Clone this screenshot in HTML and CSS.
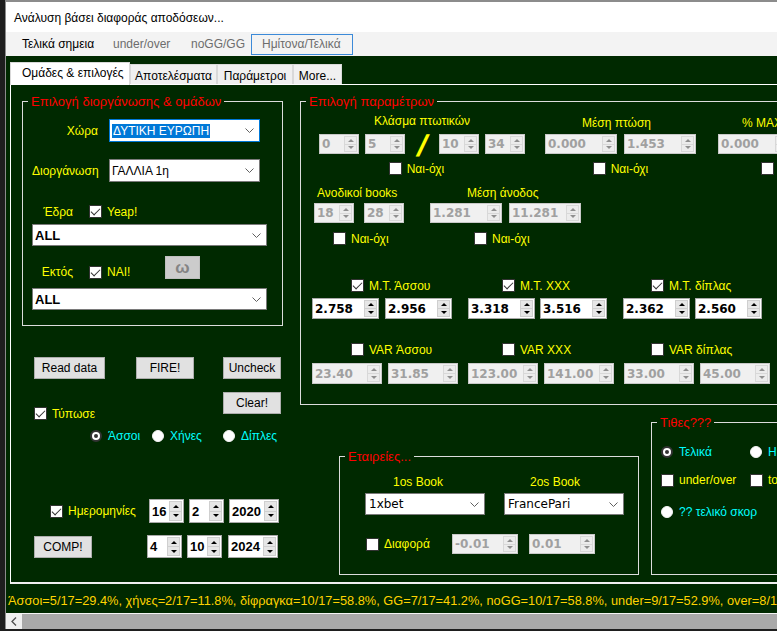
FILE: index.html
```html
<!DOCTYPE html>
<html lang="el">
<head>
<meta charset="utf-8">
<title>Ανάλυση βάσει διαφοράς αποδόσεων</title>
<link rel="stylesheet" href="styles.css">
</head>
<body>
<div class="window">
  <div class="titlebar">Ανάλυση βάσει διαφοράς αποδόσεων...</div>
  <div class="topstrip">
    <span class="ttab t1">Τελικά σημεια</span>
    <span class="ttab t2">under/over</span>
    <span class="ttab t3">noGG/GG</span>
    <span class="ttab t4">Ημίτονα/Τελικά</span>
  </div>
  <div class="content">
    <div class="tabs">
      <div class="tab sel">Ομάδες &amp; επιλογές</div>
      <div class="tab tb2">Αποτελέσματα</div>
      <div class="tab tb3">Παράμετροι</div>
      <div class="tab tb4">More...</div>
    </div>
    <div class="page">
      <div class="lcol">
        <fieldset class="grp g-league">
          <legend>Επιλογή διοργάνωσης &amp; ομάδων</legend>
          <div class="gbody lbody">
            <div class="frow r1">
              <span class="rlab">Χώρα</span>
              <span class="combo c-country focus"><span class="cv"><span class="hl">ΔΥΤΙΚΗ ΕΥΡΩΠΗ</span></span><svg class="chev" width="9" height="5" viewBox="0 0 9 5"><polyline points="0.5,0.5 4.5,4.5 8.5,0.5" fill="none" stroke="#606060" stroke-width="1"/></svg></span>
            </div>
            <div class="frow r2">
              <span class="rlab">Διοργάνωση</span>
              <span class="combo c-country"><span class="cv">ΓΑΛΛΙΑ 1η</span><svg class="chev" width="9" height="5" viewBox="0 0 9 5"><polyline points="0.5,0.5 4.5,4.5 8.5,0.5" fill="none" stroke="#606060" stroke-width="1"/></svg></span>
            </div>
            <div class="frow r3">
              <span class="slab">Έδρα</span>
              <span class="cb on"></span>
              <span class="cbt">Yeap!</span>
            </div>
            <div class="combo c-all c-all1"><span class="cv">ALL</span><svg class="chev" width="9" height="5" viewBox="0 0 9 5"><polyline points="0.5,0.5 4.5,4.5 8.5,0.5" fill="none" stroke="#606060" stroke-width="1"/></svg></div>
            <div class="frow r4">
              <span class="slab">Εκτός</span>
              <span class="cb on"></span>
              <span class="cbt nai">ΝΑΙ!</span>
              <span class="btn omega">ω</span>
            </div>
            <div class="combo c-all c-all2"><span class="cv">ALL</span><svg class="chev" width="9" height="5" viewBox="0 0 9 5"><polyline points="0.5,0.5 4.5,4.5 8.5,0.5" fill="none" stroke="#606060" stroke-width="1"/></svg></div>
          </div>
        </fieldset>

        <div class="btnrow">
          <span class="btn b-read">Read data</span>
          <span class="btn b-fire">FIRE!</span>
          <span class="btn b-unc">Uncheck</span>
        </div>
        <div class="printrow">
          <span class="print"><span class="cb on"></span><span class="ylab">Τύπωσε</span></span>
          <span class="btn b-clear">Clear!</span>
        </div>
        <div class="radiorow">
          <span class="ropt o1"><span class="rb on"></span><span class="clab">Άσσοι</span></span>
          <span class="ropt o2"><span class="rb"></span><span class="clab">Χήνες</span></span>
          <span class="ropt"><span class="rb"></span><span class="clab">Δίπλες</span></span>
        </div>
        <div class="daterow d1">
          <span class="dlead"><span class="cb on"></span><span class="ylab">Ημερομηνίες</span></span>
          <span class="spin date sd"><span class="v">16</span><span class="ud"><i class="up"></i><i class="dn"></i></span></span>
          <span class="spin date sd ml5"><span class="v">2</span><span class="ud"><i class="up"></i><i class="dn"></i></span></span>
          <span class="spin date sy ml5"><span class="v">2020</span><span class="ud"><i class="up"></i><i class="dn"></i></span></span>
        </div>
        <div class="daterow d2">
          <span class="dlead2"><span class="btn b-comp">COMP!</span></span>
          <span class="spin date sd"><span class="v">4</span><span class="ud"><i class="up"></i><i class="dn"></i></span></span>
          <span class="spin date sd ml5"><span class="v">10</span><span class="ud"><i class="up"></i><i class="dn"></i></span></span>
          <span class="spin date sy ml6"><span class="v">2024</span><span class="ud"><i class="up"></i><i class="dn"></i></span></span>
        </div>
      </div>

      <div class="rcol">
        <fieldset class="grp g-params">
          <legend>Επιλογή παραμέτρων</legend>
          <div class="gbody pbody">
            <div class="prow pa">
              <div class="cell ck">
                <div class="plab pk">Κλάσμα πτωτικών</div>
                <div class="spins">
                  <span class="spin dis w40"><span class="v">0</span><span class="ud"><i class="up"></i><i class="dn"></i></span></span>
                  <span class="spin dis w40 ml6"><span class="v">5</span><span class="ud"><i class="up"></i><i class="dn"></i></span></span>
                  <span class="slash"><span class="sl">/</span></span>
                  <span class="spin dis w40"><span class="v">10</span><span class="ud"><i class="up"></i><i class="dn"></i></span></span>
                  <span class="spin dis w40 ml6"><span class="v">34</span><span class="ud"><i class="up"></i><i class="dn"></i></span></span>
                </div>
                <div class="yn ynk"><span class="cb"></span><span class="ylab">Ναι-όχι</span></div>
              </div>
              <div class="cell cm">
                <div class="plab pm">Μέση πτώση</div>
                <div class="spins">
                  <span class="spin dis w72"><span class="v">0.000</span><span class="ud"><i class="up"></i><i class="dn"></i></span></span>
                  <span class="spin dis w72 ml7"><span class="v">1.453</span><span class="ud"><i class="up"></i><i class="dn"></i></span></span>
                </div>
                <div class="yn ynm"><span class="cb"></span><span class="ylab">Ναι-όχι</span></div>
              </div>
              <div class="cell cx">
                <div class="plab px">% MAX</div>
                <div class="spins">
                  <span class="spin dis w72"><span class="v">0.000</span><span class="ud"><i class="up"></i><i class="dn"></i></span></span>
                </div>
                <div class="yn ynx"><span class="cb"></span><span class="ylab">Ναι-όχι</span></div>
              </div>
            </div>

            <div class="prow pb">
              <div class="cell cab">
                <div class="plab plab-ab">Ανοδικοί books</div>
                <div class="spins">
                  <span class="spin dis w40"><span class="v">18</span><span class="ud"><i class="up"></i><i class="dn"></i></span></span>
                  <span class="spin dis w40 ml10"><span class="v">28</span><span class="ud"><i class="up"></i><i class="dn"></i></span></span>
                </div>
                <div class="yn ynab"><span class="cb"></span><span class="ylab">Ναι-όχι</span></div>
              </div>
              <div class="cell cma">
                <div class="plab plab-ma">Μέση άνοδος</div>
                <div class="spins">
                  <span class="spin dis w72"><span class="v">1.281</span><span class="ud"><i class="up"></i><i class="dn"></i></span></span>
                  <span class="spin dis w72 ml7"><span class="v">11.281</span><span class="ud"><i class="up"></i><i class="dn"></i></span></span>
                </div>
                <div class="yn ynma"><span class="cb"></span><span class="ylab">Ναι-όχι</span></div>
              </div>
            </div>

            <div class="prow pc">
              <div class="cell c1">
                <div class="head h39"><span class="cb on"></span><span class="ylab">Μ.Τ. Άσσου</span></div>
                <div class="spins">
                  <span class="spin w67"><span class="v">2.758</span><span class="ud"><i class="up"></i><i class="dn"></i></span></span>
                  <span class="spin w67 ml6"><span class="v">2.956</span><span class="ud"><i class="up"></i><i class="dn"></i></span></span>
                </div>
              </div>
              <div class="cell c2">
                <div class="head h34"><span class="cb on"></span><span class="ylab">Μ.Τ. ΧΧΧ</span></div>
                <div class="spins">
                  <span class="spin w67"><span class="v">3.318</span><span class="ud"><i class="up"></i><i class="dn"></i></span></span>
                  <span class="spin w67 ml5"><span class="v">3.516</span><span class="ud"><i class="up"></i><i class="dn"></i></span></span>
                </div>
              </div>
              <div class="cell c2">
                <div class="head h28"><span class="cb on"></span><span class="ylab">Μ.Τ. δίπλας</span></div>
                <div class="spins">
                  <span class="spin w67"><span class="v">2.362</span><span class="ud"><i class="up"></i><i class="dn"></i></span></span>
                  <span class="spin w67 ml5"><span class="v">2.560</span><span class="ud"><i class="up"></i><i class="dn"></i></span></span>
                </div>
              </div>
            </div>

            <div class="prow pd">
              <div class="cell c1">
                <div class="head h39"><span class="cb"></span><span class="ylab">VAR Άσσου</span></div>
                <div class="spins">
                  <span class="spin dis w70"><span class="v">23.40</span><span class="ud"><i class="up"></i><i class="dn"></i></span></span>
                  <span class="spin dis w70 ml6"><span class="v">31.85</span><span class="ud"><i class="up"></i><i class="dn"></i></span></span>
                </div>
              </div>
              <div class="cell dd">
                <div class="head h34"><span class="cb"></span><span class="ylab">VAR ΧΧΧ</span></div>
                <div class="spins">
                  <span class="spin dis w70"><span class="v">123.00</span><span class="ud"><i class="up"></i><i class="dn"></i></span></span>
                  <span class="spin dis w70 ml6"><span class="v">141.00</span><span class="ud"><i class="up"></i><i class="dn"></i></span></span>
                </div>
              </div>
              <div class="cell dd">
                <div class="head h27"><span class="cb"></span><span class="ylab">VAR δίπλας</span></div>
                <div class="spins">
                  <span class="spin dis w70"><span class="v">33.00</span><span class="ud"><i class="up"></i><i class="dn"></i></span></span>
                  <span class="spin dis w70 ml6"><span class="v">45.00</span><span class="ud"><i class="up"></i><i class="dn"></i></span></span>
                </div>
              </div>
            </div>
          </div>
        </fieldset>

        <div class="brow">
          <fieldset class="grp g-books">
            <legend>Εταιρείες...</legend>
            <div class="gbody bbody">
              <div class="blabs">
                <span class="bl1">1os Book</span>
                <span class="bl2">2os Book</span>
              </div>
              <div class="bcombos">
                <span class="combo c-book cb1"><span class="cv">1xbet</span><svg class="chev" width="9" height="5" viewBox="0 0 9 5"><polyline points="0.5,0.5 4.5,4.5 8.5,0.5" fill="none" stroke="#606060" stroke-width="1"/></svg></span>
                <span class="combo c-book cb2"><span class="cv">FrancePari</span><svg class="chev" width="9" height="5" viewBox="0 0 9 5"><polyline points="0.5,0.5 4.5,4.5 8.5,0.5" fill="none" stroke="#606060" stroke-width="1"/></svg></span>
              </div>
              <div class="bdiff">
                <span class="cb"></span>
                <span class="ylab dlab">Διαφορά</span>
                <span class="spin dis w66"><span class="v">-0.01</span><span class="ud"><i class="up"></i><i class="dn"></i></span></span>
                <span class="spin dis w66 ml11"><span class="v">0.01</span><span class="ud"><i class="up"></i><i class="dn"></i></span></span>
              </div>
            </div>
          </fieldset>
          <fieldset class="grp g-tith">
            <legend>Τιθες???</legend>
            <div class="gbody tbody">
              <div class="trow">
                <span class="ti"><span class="rb on"></span><span class="clab">Τελικά</span></span>
                <span class="ti"><span class="rb"></span><span class="clab">Ημίτονα</span></span>
              </div>
              <div class="trow tr2">
                <span class="ti"><span class="cb"></span><span class="ylab">under/over</span></span>
                <span class="ti"><span class="cb"></span><span class="ylab">total</span></span>
              </div>
              <div class="trow tr3">
                <span class="ti wide"><span class="rb"></span><span class="clab">?? τελικό σκορ</span></span>
              </div>
            </div>
          </fieldset>
        </div>
      </div>
    </div>
    <div class="status">Άσσοι=5/17=29.4%, χήνες=2/17=11.8%, δίφραγκα=10/17=58.8%, GG=7/17=41.2%, noGG=10/17=58.8%, under=9/17=52.9%, over=8/17=47.1%</div>
  </div>
  <div class="hscroll">
    <span class="sbtn"><svg width="6" height="9" viewBox="0 0 6 9"><polyline points="5,0.5 1,4.5 5,8.5" fill="none" stroke="#505050" stroke-width="1.3"/></svg></span>
  </div>
</div>
</body>
</html>
```

FILE: styles.css
```css
* { box-sizing: border-box; }
html, body { margin: 0; padding: 0; }
body {
  width: 777px;
  height: 631px;
  overflow: hidden;
  background: #1e1e1e;
  font-family: "Liberation Sans", Arial, sans-serif;
  font-size: 12px;
  color: #000;
}
.window {
  margin-left: 5px;
  width: 772px;
  height: 629px;
  border-top: 2px solid #8c8c8c;
  border-left: 1px solid #8c8c8c;
  background: #fff;
  overflow: hidden;
  display: flex;
  flex-direction: column;
}
.titlebar {
  height: 30px;
  flex: none;
  display: flex;
  align-items: center;
  padding: 2px 0 0 8px;
  font-size: 12px;
}
.topstrip {
  height: 24px;
  flex: none;
  background: #f3f3f3;
  display: flex;
  align-items: center;
  padding-left: 16px;
}
.ttab { color: #6d6d6d; flex: none; white-space: nowrap; }
.t1 { width: 91px; color: #000; }
.t2 { width: 78px; }
.t3 { width: 60px; }
.t4 {
  width: 102px;
  height: 21px;
  border: 1px solid #3c8ad8;
  padding-left: 10px;
  display: flex;
  align-items: center;
}
.content {
  height: 557px;
  flex: none;
  background: #002900;
  display: flex;
  flex-direction: column;
}
.tabs {
  margin-top: 6px;
  height: 22px;
  flex: none;
  display: flex;
  align-items: flex-end;
  padding-left: 4px;
  position: relative;
  z-index: 1;
}
.tab {
  height: 20px;
  background: #f0f0f0;
  border: 1px solid #d9d9d9;
  border-bottom: none;
  display: flex;
  align-items: center;
  justify-content: center;
  padding-top: 3px;
  white-space: nowrap;
  flex: none;
}
.tab.sel {
  width: 120px;
  height: 23px;
  margin-bottom: -1px;
  background: #fff;
  justify-content: flex-start;
  padding: 0 0 2px 11px;
}
.tb2 { width: 87px; }
.tb3 { width: 76px; }
.tb4 { width: 49px; }
.page {
  margin-left: 4px;
  width: 790px;
  height: 500px;
  flex: none;
  border: 1px solid #fff;
  border-bottom: 2px solid #f0f0f0;
  border-right: none;
  display: flex;
}
.lcol { width: 289px; flex: none; }
.rcol { width: 500px; flex: none; }

/* group boxes */
.grp {
  margin: 0;
  padding: 0;
  border: 1px solid #dcdcdc;
  min-width: 0;
  flex: none;
}
.grp > legend {
  font-size: 13px;
  line-height: 15px;
  color: #ff0000;
  padding: 0 3px;
  margin-left: 5px;
}
.g-league { margin: 9px 0 0 11px; width: 261px; }
.lbody { padding: 10px 0 15px 9px; }
.frow { display: flex; align-items: center; }
.r1 { height: 23px; }
.r2 { height: 23px; margin-top: 17px; }
.r3 { height: 13px; margin-top: 23px; }
.r4 { height: 23px; margin-top: 10px; align-items: flex-end; }
.rlab { width: 66px; text-align: right; margin-right: 11px; color: #ffff00; }
.slab { width: 41px; text-align: right; color: #ffff00; line-height: 14px; }
.r3 .cb, .r4 .cb { margin-left: 16px; }
.cbt { margin-left: 5px; color: #ffff00; line-height: 14px; }
.nai { width: 58px; }
.ylab { color: #ffff00; margin-left: 5px; white-space: nowrap; line-height: 14px; }
.clab { color: #00ffff; white-space: nowrap; line-height: 14px; }

/* combos */
.combo {
  display: flex;
  align-items: center;
  background: #fff;
  border: 1px solid #7a7a7a;
  padding: 0 5px 0 2px;
  color: #000;
  flex: none;
}
.combo .cv { flex: 1; white-space: nowrap; overflow: hidden; }
.chev { flex: none; }
.c-country { width: 151px; height: 23px; }
.focus { border-color: #0078d7; }
.hl { display: inline-block; background: #0078d7; color: #fff; line-height: 14px; padding: 0 1px; }
.c-all { width: 235px; height: 22px; font-weight: bold; font-size: 13px; }
.c-all1 { margin-top: 6px; }
.c-all2 { margin-top: 9px; }

/* buttons */
.btn {
  display: flex;
  align-items: center;
  justify-content: center;
  background: #e1e1e1;
  border: 1px solid #adadad;
  height: 22px;
  flex: none;
  white-space: nowrap;
}
.omega {
  width: 35px;
  height: 23px;
  background: #cccccc;
  border-color: #bfbfbf;
  color: #848484;
  font-weight: bold;
  font-size: 17px;
}
.btnrow { display: flex; margin-top: 31px; padding-left: 23px; }
.b-read { width: 71px; }
.b-fire { width: 58px; margin-left: 31px; }
.b-unc { width: 58px; margin-left: 29px; }
.printrow { display: flex; margin-top: 13px; padding-left: 23px; }
.print { width: 189px; height: 13px; margin-top: 15px; display: flex; align-items: center; flex: none; }
.b-clear { width: 58px; }
.radiorow { display: flex; align-items: center; height: 14px; margin-top: 9px; padding-left: 79px; }
.ropt { display: flex; align-items: center; flex: none; }
.o1 { width: 62px; }
.o2 { width: 71px; }
.daterow { display: flex; align-items: center; }
.d1 { margin-top: 56px; height: 24px; padding-left: 39px; }
.d2 { margin-top: 12px; height: 23px; padding-left: 23px; }
.dlead { width: 99px; display: flex; align-items: center; flex: none; }
.dlead2 { width: 113px; flex: none; }
.b-comp { width: 58px; }

/* checkbox & radio */
.cb {
  width: 13px;
  height: 13px;
  flex: none;
  border: 1px solid #333;
  background: #fff;
  position: relative;
}
.cb.on::after {
  content: "";
  position: absolute;
  left: 3px;
  top: 0px;
  width: 4px;
  height: 8px;
  border: solid #333;
  border-width: 0 1.5px 1.5px 0;
  transform: rotate(45deg);
}
.rb {
  width: 12px;
  height: 12px;
  flex: none;
  border-radius: 50%;
  background: #fff;
  border: 1px solid #f4f4f4;
  margin-right: 6px;
  position: relative;
}
.rb.on { border: 2px solid #333; }
.rb.on::after {
  content: "";
  position: absolute;
  left: 2px;
  top: 2px;
  width: 4px;
  height: 4px;
  border-radius: 50%;
  background: #333;
}

/* spinners */
.spin {
  display: flex;
  height: 21px;
  flex: none;
  border: 1px solid #a9a9a9;
  background: #fff;
  font-family: "DejaVu Sans", Verdana, sans-serif;
  font-weight: bold;
  font-size: 12px;
  color: #000;
}
.spin .v {
  flex: 1;
  padding-left: 2px;
  display: flex;
  align-items: center;
  overflow: hidden;
  white-space: nowrap;
}
.spin .ud {
  width: 14px;
  flex: none;
  display: flex;
  flex-direction: column;
  padding: 1px 1px 1px 0;
}
.spin .ud i {
  flex: 1;
  background: #e6e6e6;
  border: 1px solid #cfcfcf;
  display: flex;
  align-items: center;
  justify-content: center;
}
.spin .ud i + i { border-top: none; }
.ud .up::before {
  content: "";
  border-left: 3px solid transparent;
  border-right: 3px solid transparent;
  border-bottom: 3px solid #000;
}
.ud .dn::before {
  content: "";
  border-left: 3px solid transparent;
  border-right: 3px solid transparent;
  border-top: 3px solid #000;
}
.spin.dis { background: #f0f0f0; border-color: #c8c8c8; color: #a0a0a0; }
.spin.dis .ud i { background: #ececec; border-color: #d8d8d8; }
.spin.dis .ud .up::before { border-bottom-color: #8f8f8f; }
.spin.dis .ud .dn::before { border-top-color: #8f8f8f; }
.spin.date { font-family: "Liberation Sans", Arial, sans-serif; font-size: 13px; }
.sd { width: 35px; height: 100%; }
.sy { width: 50px; height: 100%; }
.w40 { width: 40px; height: 20px; }
.w72 { width: 72px; height: 20px; }
.w67 { width: 67px; }
.w70 { width: 70px; }
.w66 { width: 66px; height: 20px; }
.ml5 { margin-left: 5px; }
.ml6 { margin-left: 6px; }
.ml7 { margin-left: 7px; }
.ml10 { margin-left: 10px; }
.ml11 { margin-left: 11px; }

/* params group */
.g-params { margin-top: 9px; width: 490px; }
.pbody { padding-bottom: 20px; }
.prow { display: flex; align-items: flex-start; }
.cell { flex: none; }
.plab { color: #ffff00; line-height: 14px; white-space: nowrap; }
.pa .plab { height: 25px; text-align: center; }
.pk { padding-top: 5px; }
.pm { padding-top: 7px; padding-right: 8px; }
.pa .px { padding-top: 7px; padding-left: 24px; text-align: left; }
.spins { display: flex; height: 20px; }
.slash { width: 34px; height: 20px; flex: none; display: flex; justify-content: center; }
.sl {
  display: block;
  color: #ffff00;
  font-family: "Liberation Sans", Arial, sans-serif;
  font-weight: bold;
  font-size: 30px;
  line-height: 24px;
  height: 20px;
  transform: skewX(-16deg);
  padding-left: 3px;
}
.yn { display: flex; align-items: center; height: 13px; margin-top: 8px; }
.yn .ylab { margin-left: 5px; }
.ck { margin-left: 18px; width: 206px; }
.ynk { justify-content: center; padding-right: 11px; }
.cm { margin-left: 20px; width: 151px; }
.ynm { justify-content: center; }
.cx { margin-left: 22px; width: 150px; }
.ynx { padding-left: 43px; }

.pb { margin-top: 11px; }
.pb .plab { height: 14px; }
.pb .spins { margin-top: 3px; }
.pb .yn { margin-top: 9px; }
.cab { margin-left: 13px; width: 90px; }
.plab-ab { padding-left: 3px; }
.ynab { padding-left: 19px; }
.cma { margin-left: 26px; width: 151px; }
.plab-ma { padding-left: 37px; }
.ynma { padding-left: 44px; }

.head { display: flex; align-items: center; height: 13px; }
.head .ylab { margin-left: 5px; }
.h39 { padding-left: 39px; }
.h34 { padding-left: 34px; }
.h28 { padding-left: 28px; }
.h27 { padding-left: 27px; }
.pc { margin-top: 34px; }
.pc .spins { margin-top: 6px; height: 21px; }
.c1 { margin-left: 11px; }
.c2 { margin-left: 16px; }
.pd { margin-top: 24px; }
.pd .spins { margin-top: 7px; height: 21px; }
.dd { margin-left: 10px; }

/* bottom groups */
.brow { display: flex; align-items: flex-end; margin-top: 10px; height: 160px; }
.g-books { margin-left: 39px; width: 300px; height: 126px; }
.bbody { padding-top: 11px; }
.blabs { display: flex; height: 14px; line-height: 14px; color: #ffff00; }
.bl1 { margin-left: 25px; width: 120px; text-align: center; padding-right: 14px; flex: none; }
.bl2 { margin-left: 19px; width: 120px; text-align: center; padding-right: 18px; flex: none; }
.bcombos { display: flex; margin-top: 4px; height: 22px; }
.c-book {
  width: 120px;
  height: 22px;
  font-family: "DejaVu Sans", Verdana, sans-serif;
  font-size: 12px;
  padding-left: 3px;
}
.cb1 { margin-left: 25px; }
.cb2 { margin-left: 19px; }
.bdiff { display: flex; align-items: center; margin-top: 19px; height: 20px; padding-left: 26px; }
.dlab { width: 68px; flex: none; }
.g-tith { margin-left: 12px; width: 200px; height: 160px; }
.tbody { padding-top: 15px; }
.trow { display: flex; align-items: center; height: 14px; padding-left: 9px; }
.tr2 { margin-top: 14px; }
.tr3 { margin-top: 18px; }
.ti { width: 89px; display: flex; align-items: center; flex: none; }
.ti.wide { width: 150px; }
.ti .cb + .ylab { margin-left: 5px; }

/* status and scrollbar */
.status {
  height: 29px;
  flex: none;
  padding: 10px 0 0 2px;
  line-height: 14px;
  font-size: 12.8px;
  color: #ffd200;
  white-space: nowrap;
  overflow: hidden;
}
.hscroll {
  height: 16px;
  flex: none;
  background: #a9a9a9;
  border-top: 1px solid #f4f4f4;
  display: flex;
}
.sbtn {
  width: 16px;
  height: 100%;
  background: #f0f0f0;
  display: flex;
  align-items: center;
  justify-content: center;
}
```
